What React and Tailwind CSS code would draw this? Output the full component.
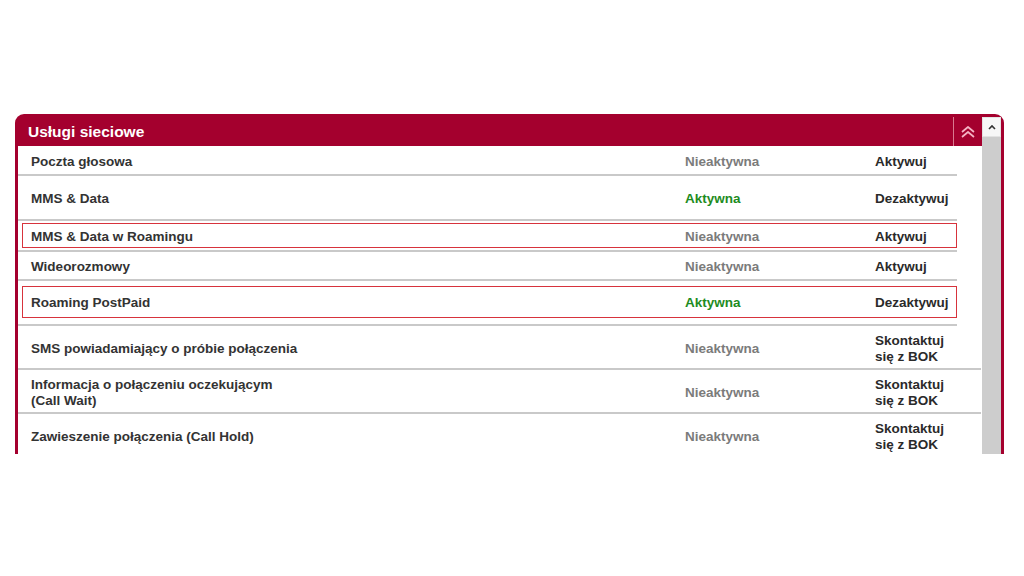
import React from "react";

const font = { fontFamily: '"Liberation Sans", Arial, sans-serif' };

function Cells({ name, status, active, action }) {
  return (
    <>
      <div className="w-[654px] text-[13.5px] font-bold leading-[16px] text-[#333333]">{name}</div>
      <div className={"w-[190px] text-[13.5px] font-bold leading-[16px] " + (active ? "text-[#1e8c1e]" : "text-[#7b7b7b]")}>
        {status}
      </div>
      <div className="text-[13.5px] font-bold leading-[16px] text-[#2a2a2a]">{action}</div>
    </>
  );
}

function Row({ h, wide, children }) {
  return (
    <div className={(wide ? "w-[963px] " : "w-[939px] ") + h + " border-b-2 border-[#c9c9c9] shrink-0"}>
      {children}
    </div>
  );
}

function Plain(props) {
  return (
    <div className="flex h-full items-center pl-[13px] pt-[3px]">
      <Cells {...props} />
    </div>
  );
}

function Boxed({ pt, bh, ...props }) {
  return (
    <div className={pt}>
      <div className={"ml-[4px] flex w-[935px] items-center border border-[#d7333c] pl-[8px] pt-[2px] " + bh}>
        <Cells {...props} />
      </div>
    </div>
  );
}

export default function App() {
  return (
    <div className="h-[576px] w-[1024px] overflow-hidden bg-white" style={font}>
      <div className="ml-[15px] mt-[114px] flex h-[340px] w-[989px] overflow-hidden rounded-t-[9px] bg-[#a4002e] px-[3px] pt-[3px]">
        <div className="flex w-[964px] flex-col">
          <div className="flex h-[29px] shrink-0 items-center">
            <div className="flex-1 pl-[10px] text-[15.5px] font-bold text-white">Usługi sieciowe</div>
            <div className="flex h-full w-[29px] items-center justify-center border-l border-[#d9798f]">
              <svg width="16" height="12" viewBox="0 0 16 12" fill="none" stroke="#f5b3c4" strokeWidth="1.7" strokeLinejoin="round">
                <path d="M2 6 L8 1 L14 6" />
                <path d="M2 11 L8 6 L14 11" />
              </svg>
            </div>
          </div>
          <div className="flex flex-1 flex-col bg-white">
            <Row h="h-[30px]">
              <Plain name="Poczta głosowa" status="Nieaktywna" action="Aktywuj" />
            </Row>
            <Row h="h-[45px]">
              <Plain name="MMS & Data" status="Aktywna" active action="Dezaktywuj" />
            </Row>
            <Row h="h-[31px]">
              <Boxed pt="pt-[2px]" bh="h-[25px]" name="MMS & Data w Roamingu" status="Nieaktywna" action="Aktywuj" />
            </Row>
            <Row h="h-[29px]">
              <Plain name="Wideorozmowy" status="Nieaktywna" action="Aktywuj" />
            </Row>
            <Row h="h-[45px]">
              <Boxed pt="pt-[5px]" bh="h-[32px]" name="Roaming PostPaid" status="Aktywna" active action="Dezaktywuj" />
            </Row>
            <Row h="h-[44px]" wide>
              <Plain name="SMS powiadamiający o próbie połączenia" status="Nieaktywna" action={<>Skontaktuj<br />się z BOK</>} />
            </Row>
            <Row h="h-[44px]" wide>
              <Plain name={<>Informacja o połączeniu oczekującym<br />(Call Wait)</>} status="Nieaktywna" action={<>Skontaktuj<br />się z BOK</>} />
            </Row>
            <Row h="h-[44px]" wide>
              <Plain name="Zawieszenie połączenia (Call Hold)" status="Nieaktywna" action={<>Skontaktuj<br />się z BOK</>} />
            </Row>
          </div>
        </div>
        <div className="flex w-[19px] flex-col bg-[#cdcdcd]">
          <div className="flex h-[20px] items-center justify-center border border-[#e3e3e3] bg-[#f7f7f7]">
            <svg width="8" height="6" viewBox="0 0 8 6" fill="none" stroke="#333" strokeWidth="1.6">
              <path d="M1 5 L4 2 L7 5" />
            </svg>
          </div>
          <div className="flex-1" />
        </div>
      </div>
    </div>
  );
}
